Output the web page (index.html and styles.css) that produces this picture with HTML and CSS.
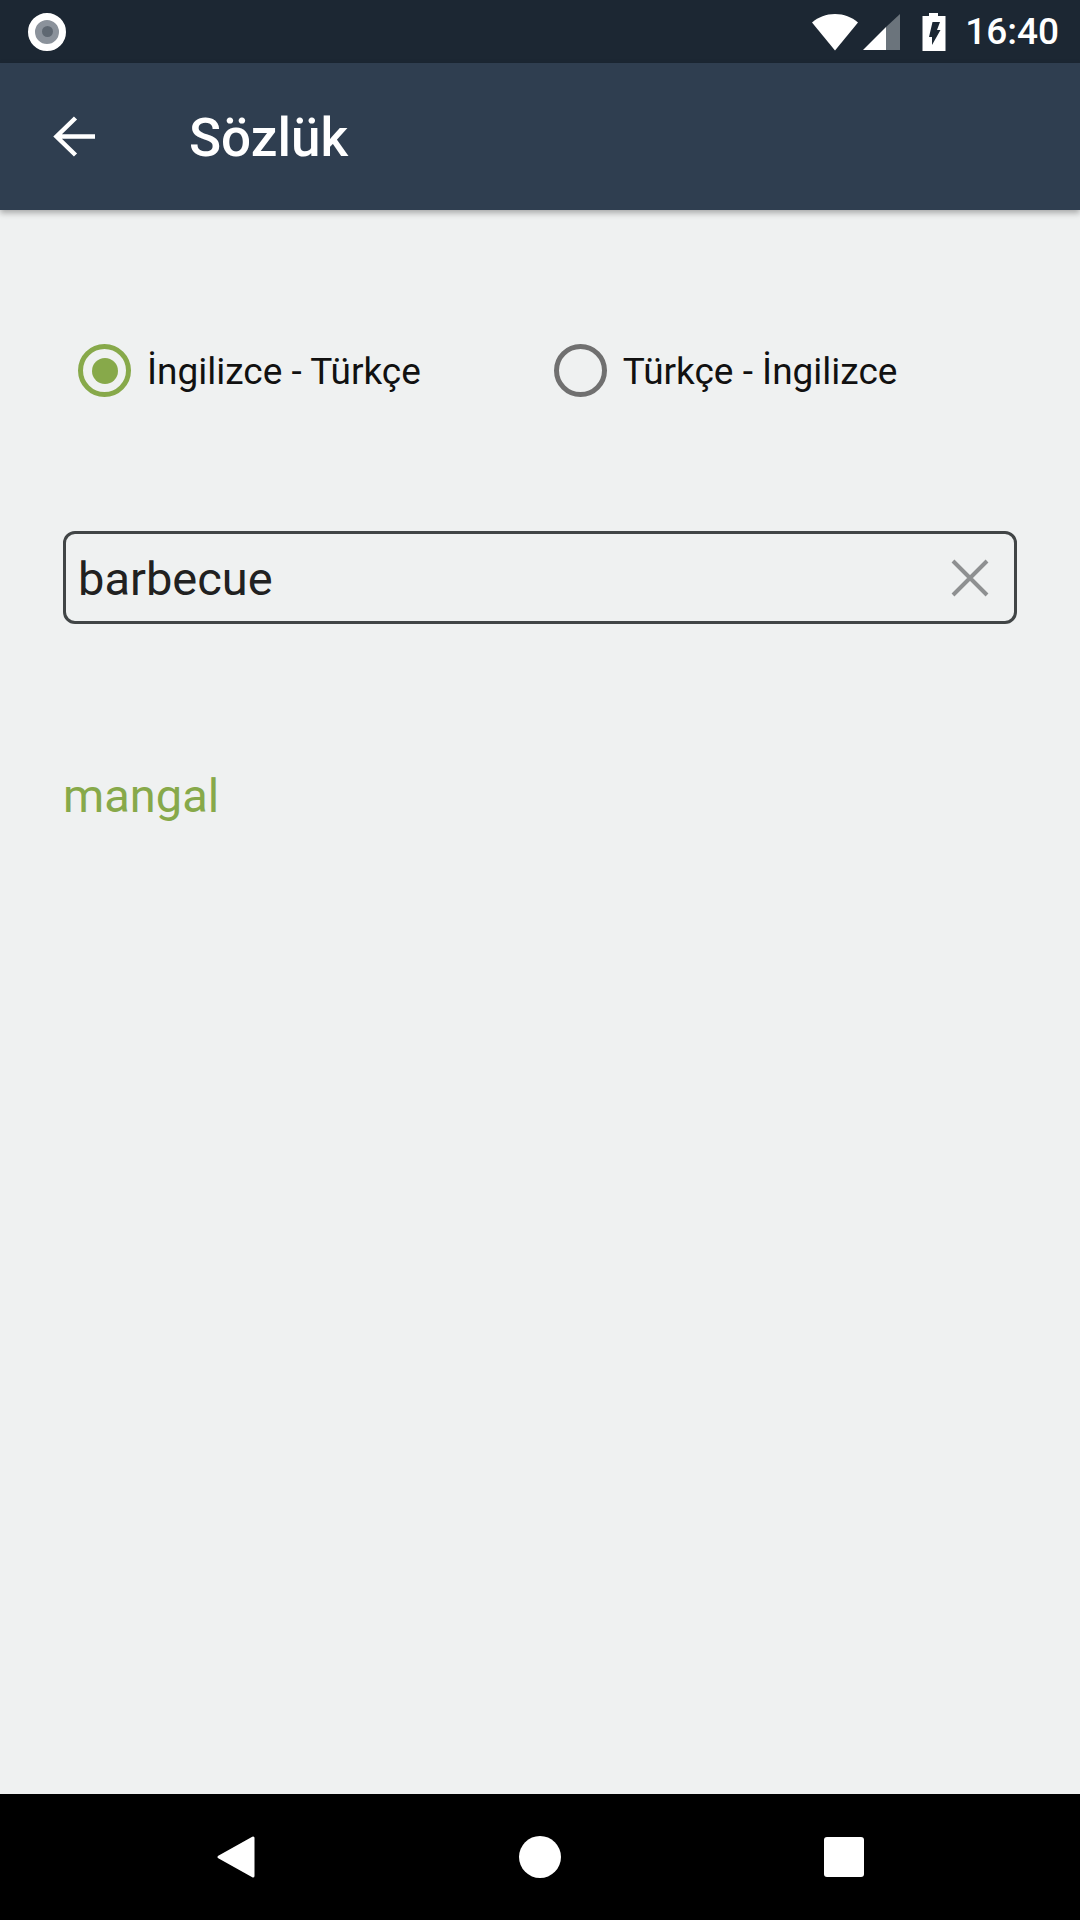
FILE: index.html
```html
<!DOCTYPE html>
<html lang="tr">
<head>
    <meta charset="UTF-8">
    <meta name="viewport" content="width=device-width, initial-scale=1.0">
    <title>Sözlük</title>
    <link rel="stylesheet" href="styles.css">
</head>
<body>
    <div class="screen">
        <div class="status-bar">
            <div class="rec-dot"><div class="rec-inner"></div></div>
            <div class="status-right">
                <svg class="wifi" width="46" height="38" viewBox="0 0 46 38"><path d="M0 9.500C6.500 4 14 1 23 1S39.500 4 46 9.500L23 37.500Z" fill="#fff"/></svg>
                <svg class="signal" width="37" height="38" viewBox="0 0 37 38"><path d="M37 1V37H23V14Z" fill="#6b747c"/><path d="M23 14V37H0Z" fill="#fff"/></svg>
                <svg class="battery" width="24" height="38" viewBox="0 0 24 38"><path d="M7 0H16V3H23.500V38H0.500V3H7Z" fill="#fff"/><path d="M10.500 9H18L15 17H18.500L10 32V24H7Z" fill="#1c2733"/></svg>
                <span class="clock">16:40</span>
            </div>
        </div>
        <div class="app-bar">
            <svg class="back" width="44" height="44" viewBox="0 0 44 44"><path d="M43 21.500H5M23.500 3L4.500 21.500L23.500 40" fill="none" stroke="#fff" stroke-width="4.500"/></svg>
            <h1 class="title">Sözlük</h1>
        </div>
        <div class="content">
            <div class="radio-group">
                <div class="radio-item">
                    <div class="radio checked"><div class="radio-fill"></div></div>
                    <span class="radio-label">İngilizce - Türkçe</span>
                </div>
                <div class="radio-item">
                    <div class="radio"></div>
                    <span class="radio-label">Türkçe - İngilizce</span>
                </div>
            </div>
            <div class="search-box">
                <span class="search-text">barbecue</span>
                <svg class="clear" width="38" height="38" viewBox="0 0 38 38"><path d="M2 2L36 36M36 2L2 36" stroke="#8e9091" stroke-width="4" fill="none"/></svg>
            </div>
            <div class="result">mangal</div>
        </div>
        <div class="nav-bar">
            <svg width="40" height="44" viewBox="0 0 40 44"><path d="M37 3V41L3 22Z" fill="#fff" stroke="#fff" stroke-width="3" stroke-linejoin="round"/></svg>
            <div class="nav-home"></div>
            <div class="nav-recent"></div>
        </div>
    </div>
</body>
</html>
```

FILE: styles.css
```css
* {
    box-sizing: border-box;
}
body {
    margin: 0;
    font-family: Roboto, 'Noto Sans', sans-serif;
    background: #eff1f1;
}
.screen {
    width: 1080px;
    height: 1920px;
    display: flex;
    flex-direction: column;
}
.status-bar {
    height: 63px;
    background: #1c2733;
    display: flex;
    align-items: center;
    justify-content: space-between;
    padding: 0 21px 0 28px;
}
.rec-dot {
    width: 38px;
    height: 38px;
    border-radius: 50%;
    background: #8b929b;
    border: 7px solid #fff;
    display: flex;
    align-items: center;
    justify-content: center;
}
.rec-inner {
    width: 11px;
    height: 11px;
    border-radius: 50%;
    background: #5f6872;
}
.status-right {
    display: flex;
    align-items: center;
    color: #fff;
}
.wifi {
    margin-right: 5px;
}
.signal {
    margin-right: 22px;
}
.battery {
    margin-right: 19px;
}
.clock {
    font-size: 37px;
    font-weight: 500;
    line-height: 63px;
}
.app-bar {
    height: 147px;
    background: #2f3e50;
    display: flex;
    align-items: center;
    padding-left: 52px;
    box-shadow: 0 3px 6px rgba(0,0,0,0.3);
    position: relative;
}
.back {
    margin-right: 93px;
}
.title {
    margin: 0;
    padding-top: 2px;
    color: #fff;
    font-size: 53px;
    font-weight: 500;
}
.content {
    flex: 1;
    padding: 0 63px;
}
.radio-group {
    display: flex;
    padding: 134px 0 0 15px;
}
.radio-item {
    width: 477px;
    display: flex;
    align-items: center;
}
.radio-item:first-child {
    width: 490px;
}
.radio {
    width: 53px;
    height: 53px;
    border-radius: 50%;
    border: 5px solid #707070;
    display: flex;
    align-items: center;
    justify-content: center;
    margin-right: 16px;
}
.radio.checked {
    border-color: #87a94a;
}
.radio-fill {
    width: 26px;
    height: 26px;
    border-radius: 50%;
    background: #87a94a;
}
.radio-label {
    font-size: 37px;
    color: #111;
    padding-top: 2px;
}
.search-box {
    margin-top: 134px;
    height: 93px;
    width: 954px;
    border: 3px solid #414546;
    border-radius: 12px;
    display: flex;
    align-items: center;
    justify-content: space-between;
    padding: 0 25px 0 12px;
}
.search-text {
    font-size: 47px;
    color: #212121;
    padding-top: 2px;
}
.result {
    margin-top: 144px;
    font-size: 47px;
    color: #87a94a;
}
.nav-bar {
    height: 126px;
    background: #000;
    display: flex;
    align-items: center;
    padding-left: 216px;
}
.nav-home {
    width: 42px;
    height: 42px;
    border-radius: 50%;
    background: #fff;
    margin-left: 263px;
}
.nav-recent {
    width: 40px;
    height: 40px;
    border-radius: 3px;
    background: #fff;
    margin-left: 263px;
}
```
